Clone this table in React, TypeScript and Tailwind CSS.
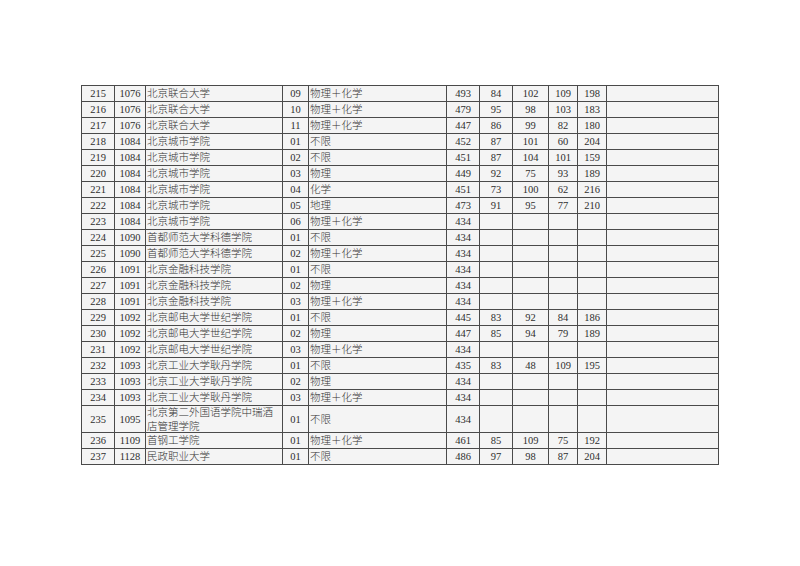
import React from "react";

type Row = [string, string, string, string, string, string, string?, string?, string?, string?];

const rows: Row[] = [
  ["215", "1076", "北京联合大学", "09", "物理＋化学", "493", "84", "102", "109", "198"],
  ["216", "1076", "北京联合大学", "10", "物理＋化学", "479", "95", "98", "103", "183"],
  ["217", "1076", "北京联合大学", "11", "物理＋化学", "447", "86", "99", "82", "180"],
  ["218", "1084", "北京城市学院", "01", "不限", "452", "87", "101", "60", "204"],
  ["219", "1084", "北京城市学院", "02", "不限", "451", "87", "104", "101", "159"],
  ["220", "1084", "北京城市学院", "03", "物理", "449", "92", "75", "93", "189"],
  ["221", "1084", "北京城市学院", "04", "化学", "451", "73", "100", "62", "216"],
  ["222", "1084", "北京城市学院", "05", "地理", "473", "91", "95", "77", "210"],
  ["223", "1084", "北京城市学院", "06", "物理＋化学", "434"],
  ["224", "1090", "首都师范大学科德学院", "01", "不限", "434"],
  ["225", "1090", "首都师范大学科德学院", "02", "物理＋化学", "434"],
  ["226", "1091", "北京金融科技学院", "01", "不限", "434"],
  ["227", "1091", "北京金融科技学院", "02", "物理", "434"],
  ["228", "1091", "北京金融科技学院", "03", "物理＋化学", "434"],
  ["229", "1092", "北京邮电大学世纪学院", "01", "不限", "445", "83", "92", "84", "186"],
  ["230", "1092", "北京邮电大学世纪学院", "02", "物理", "447", "85", "94", "79", "189"],
  ["231", "1092", "北京邮电大学世纪学院", "03", "物理＋化学", "434"],
  ["232", "1093", "北京工业大学耿丹学院", "01", "不限", "435", "83", "48", "109", "195"],
  ["233", "1093", "北京工业大学耿丹学院", "02", "物理", "434"],
  ["234", "1093", "北京工业大学耿丹学院", "03", "物理＋化学", "434"],
  ["235", "1095", "北京第二外国语学院中瑞酒\n店管理学院", "01", "不限", "434"],
  ["236", "1109", "首钢工学院", "01", "物理＋化学", "461", "85", "109", "75", "192"],
  ["237", "1128", "民政职业大学", "01", "不限", "486", "97", "98", "87", "204"],
];

const cellBase =
  "border-r border-[#4a4a4a] flex items-center shrink-0 pt-px";

function Cell({
  w,
  center,
  cjk,
  children,
}: {
  w: string;
  center?: boolean;
  cjk?: boolean;
  children?: React.ReactNode;
}) {
  return (
    <div
      className={`${cellBase} ${w} ${center ? "justify-center" : "justify-start pl-[1px]"} ${
        cjk ? "font-light text-[#333333]" : ""
      }`}
    >
      {children}
    </div>
  );
}

export default function App() {
  return (
    <div
      className="w-[800px] h-[566px] bg-white pt-[85px] pl-[81px] text-[#2e2e2e] text-[10.5px] leading-[14px]"
      style={{ fontFamily: '"Liberation Serif", "Noto Sans CJK SC", serif' }}
    >
      <div className="w-[638px] border-l border-t border-[#4a4a4a] bg-[#f4f4f4]">
        {rows.map((r) => {
          const tall = r[2].includes("\n");
          const lines = r[2].split("\n");
          return (
            <div
              key={r[0]}
              className={`flex border-b border-[#4a4a4a] ${tall ? "h-[27px]" : "h-[16px]"}`}
            >
              <Cell w="w-[33px]" center>{r[0]}</Cell>
              <Cell w="w-[31px]" center>{r[1]}</Cell>
              <div
                className={`${cellBase} w-[137px] pl-[1px] flex-col !items-start justify-center font-light text-[#333333]`}
              >
                {lines.map((l, i) => (
                  <span key={i} className="block whitespace-nowrap">{l}</span>
                ))}
              </div>
              <Cell w="w-[26px]" center>{r[3]}</Cell>
              <Cell w="w-[138px]" cjk>{r[4]}</Cell>
              <Cell w="w-[33px]" center>{r[5]}</Cell>
              <Cell w="w-[33px]" center>{r[6]}</Cell>
              <Cell w="w-[36px]" center>{r[7]}</Cell>
              <Cell w="w-[29px]" center>{r[8]}</Cell>
              <Cell w="w-[29px]" center>{r[9]}</Cell>
              <Cell w="w-[112px]" />
            </div>
          );
        })}
      </div>
    </div>
  );
}
